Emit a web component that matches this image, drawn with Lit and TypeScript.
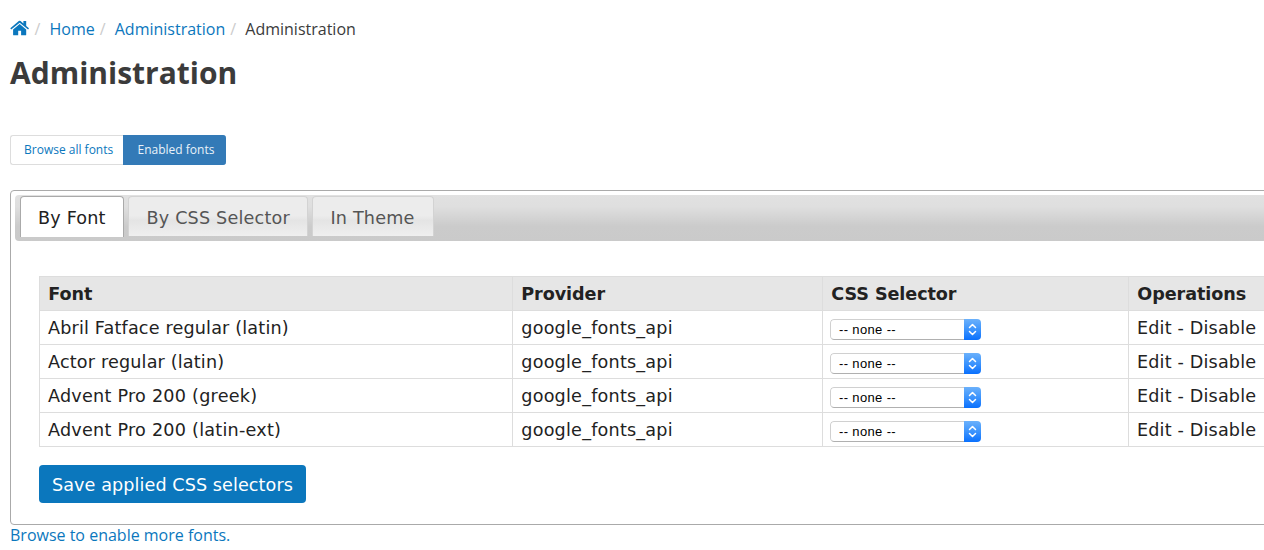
import { LitElement, html, css } from "lit";
import { customElement } from "lit/decorators.js";

const rows = [
  { font: "Abril Fatface regular (latin)", cls: "r0" },
  { font: "Actor regular (latin)", cls: "r1" },
  { font: "Advent Pro 200 (greek)", cls: "r2" },
  { font: "Advent Pro 200 (latin-ext)", cls: "r3" },
];

@customElement("font-select")
class FontSelect extends LitElement {
  static styles = css`
    :host { display: block; }
    .select { display: flex; box-sizing: border-box; width: 151px; height: 21px; border-radius: 4px; overflow: hidden; background: #fff; }
    .value { flex: 1; box-sizing: border-box; border: 1px solid #d0d0d0; border-bottom-color: #b0b0b0; border-right: 0; border-radius: 4px 0 0 4px; padding-left: 8px; font: 13px/19px "Liberation Sans", Arial, sans-serif; letter-spacing: 0.36px; color: #000; white-space: pre; }
    .arrows { width: 17px; height: 21px; background: linear-gradient(#6bb1fb, #3c94fd 50%, #0a70fd); }
    svg { display: block; }
  `;
  render() {
    return html`<div class="select"><div class="value">-- none --</div><div class="arrows">
      <svg width="17" height="21" viewBox="0 0 17 21" fill="none" stroke="#fff" stroke-width="1.5" stroke-linecap="round" stroke-linejoin="round"><path d="M5.5 8.5l3-3 3 3M5.5 12.5l3 3 3-3" /></svg>
    </div></div>`;
  }
}

@customElement("app-root")
class AppRoot extends LitElement {
  static styles = css`
    :host { display: block; width: 1264px; height: 550px; overflow: hidden; background: #fff; color: #3b3b3b; font: 16px/24px "Open Sans", sans-serif; white-space: nowrap; }
    * { box-sizing: border-box; }
    a { color: #0b77bd; text-decoration: none; }
    .crumbs { display: flex; padding: 17px 0 0 10px; height: 41px; }
    .home { width: 20px; height: 24px; padding-top: 3px; }
    .home svg { display: block; }
    .sep { color: #ccc; width: 20px; padding-left: 5px; }
    .sep.first { width: 19.5px; padding-left: 4.5px; }
    h1 { margin: 0; padding: 12px 0 0 10px; height: 94px; font-size: 30px; line-height: 40px; font-weight: 700; color: #3b3b3b; }
    .pills { display: flex; margin-left: 10px; height: 30px; font-size: 12px; line-height: 28px; }
    .pill { border: 1px solid #ddd; border-right: 0; border-radius: 3px 0 0 3px; width: 113px; padding-left: 13px; }
    .pill.active { width: 103px; padding-left: 13.5px; background: #337ab7; border-color: #337ab7; color: #e9f2f9; border-radius: 0 3px 3px 0; }
    .panel { margin: 25px 0 0 10px; width: 1300px; height: 335px; border: 1px solid #aaa; border-radius: 4px; padding: 4px; font: 17.6px/24px "DejaVu Sans", Verdana, sans-serif; color: #222; }
    .bar { display: flex; gap: 4px; height: 46px; padding: 1px 0 0 5px; border-radius: 4px; background: linear-gradient(#e1e1e1, #dfdfdf 25%, #cbcbcb 68%, #cacaca); }
    .tab { height: 40px; border: 1px solid #d3d3d3; border-bottom: 0; border-radius: 4px 4px 0 0; background: linear-gradient(#ececec 0 48%, #e4e4e4 60%, #efefef); color: #555; padding: 9px 0 0 17.5px; letter-spacing: 0.19px; }
    .tab.active { height: 41px; border-color: #aaa; background: #fff; color: #212121; width: 104px; padding-left: 17px; }
    .t1 { width: 180px; }
    .t2 { width: 122px; letter-spacing: 0.17px; }
    .grid { display: grid; grid-template-columns: 473px 310px 306px 200px; grid-template-rows: repeat(5, 34px); margin: 35px 0 0 24px; border-top: 1px solid #ddd; border-left: 1px solid #ddd; width: 1290px; }
    .cell { border-right: 1px solid #ddd; border-bottom: 1px solid #ddd; padding: 5px 0 0 8px; letter-spacing: 0.17px; }
    .r2, .r3 { letter-spacing: 0.24px; }
    .provider { padding-left: 8.3px; letter-spacing: 0.21px; }
    .head { background: #e6e6e6; font-weight: 700; letter-spacing: -0.08px; padding-left: 8.3px; }
    .pick { padding: 8px 0 0 7px; }
    .save { margin: 18px 0 0 24px; width: 267px; height: 38px; border: 0; border-radius: 4px; background: #0b77bd; color: #fff; font: inherit; letter-spacing: 0.08px; line-height: 38px; padding: 1px 0 0 13px; text-align: left; display: block; }
    .more { padding: 0 0 0 10px; margin-top: -2px; }
  `;
  render() {
    return html`
      <nav class="crumbs">
        <a class="home"><svg width="20" height="16" viewBox="0 0 20 16" fill="#0b77bd"><path d="M9.7 4.1L3.1 9.5v5.2q0 .6.6.6h4.5v-4.5h2.9v4.5h4.5q.6 0 .6-.6V9.5z" /><path d="M.3 8.3L8.8 1.1q.9-.6 1.8 0l2.8 2.4V1.1h2.8v4.8l2.8 2.4-.9 1.1L9.7 2.7 1.2 9.4z" /></svg></a>
        <span class="sep first">/</span><a>Home</a><span class="sep">/</span><a>Administration</a><span class="sep">/</span><span>Administration</span>
      </nav>
      <h1>Administration</h1>
      <div class="pills"><a class="pill">Browse all fonts</a><a class="pill active">Enabled fonts</a></div>
      <section class="panel">
        <div class="bar"><div class="tab active">By Font</div><div class="tab t1">By CSS Selector</div><div class="tab t2">In Theme</div></div>
        <div class="grid">
          ${["Font", "Provider", "CSS Selector", "Operations"].map((h) => html`<div class="cell head">${h}</div>`)}
          ${rows.map((r) => html`<div class="cell ${r.cls}">${r.font}</div><div class="cell provider">google_fonts_api</div><div class="cell pick"><font-select></font-select></div><div class="cell">Edit - Disable</div>`)}
        </div>
        <button class="save">Save applied CSS selectors</button>
      </section>
      <div class="more"><a>Browse to enable more fonts.</a></div>
    `;
  }
}
